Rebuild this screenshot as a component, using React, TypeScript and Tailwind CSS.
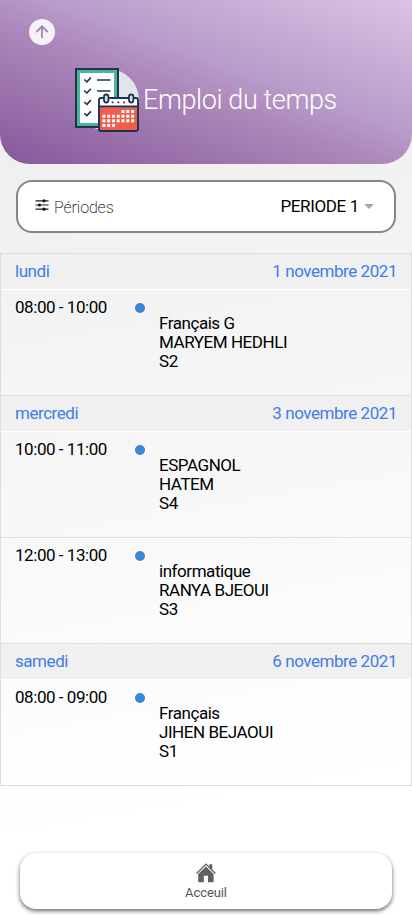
import React from 'react';

type Lesson = {
  time: string;
  subject: string;
  teacher: string;
  room: string;
};

type Day = {
  name: string;
  date: string;
  lessons: Lesson[];
};

const days: Day[] = [
  {
    name: 'lundi',
    date: '1 novembre 2021',
    lessons: [{ time: '08:00 - 10:00', subject: 'Français G', teacher: 'MARYEM HEDHLI', room: 'S2' }],
  },
  {
    name: 'mercredi',
    date: '3 novembre 2021',
    lessons: [
      { time: '10:00 - 11:00', subject: 'ESPAGNOL', teacher: 'HATEM', room: 'S4' },
      { time: '12:00 - 13:00', subject: 'informatique', teacher: 'RANYA BJEOUI', room: 'S3' },
    ],
  },
  {
    name: 'samedi',
    date: '6 novembre 2021',
    lessons: [{ time: '08:00 - 09:00', subject: 'Français', teacher: 'JIHEN BEJAOUI', room: 'S1' }],
  },
];

function BackIcon() {
  return (
    <svg viewBox="0 0 26 26" className="w-[26px] h-[26px]">
      <circle cx="13" cy="13" r="13" fill="#f5f1f8" />
      <path d="M13 19V7.5M7.3 13 13 7.3l5.7 5.7" fill="none" stroke="#a184b4" strokeWidth="1.8" />
    </svg>
  );
}

function ScheduleIcon() {
  const dots = [
    [47.4, 42.9], [52.2, 42.9], [57, 42.9],
    [28.3, 47.6], [33, 47.6], [37.8, 47.6], [42.6, 47.6], [47.4, 47.6], [52.2, 47.6], [57, 47.6],
    [28.3, 52.2], [33, 52.2], [37.8, 52.2], [42.6, 52.2], [47.4, 52.2], [52.2, 52.2], [57, 52.2],
    [28.3, 56.8], [33, 56.8], [37.8, 56.8],
  ];

  return (
    <svg viewBox="0 0 64 64" className="w-16 h-16 shrink-0">
      <circle cx="33" cy="32" r="31" fill="#e1e5ea" />
      <path d="M1 1h42v58H1z" fill="#4db39b" stroke="#1d3450" strokeWidth="2" />
      <path d="M5 5h34v50H5z" fill="#fff" />
      {/* Checklist */}
      <g fill="none" stroke="#1d3450" strokeWidth="1.6">
        <path d="m9.3 11.5 2.6 2.3 4-4.2M9.3 22.7l2.6 2.3 4-4.2M9.3 34l2.6 2.3 4-4.2M9.3 45.3l2.6 2.3 4-4.2" />
        <path d="M22 12h13.5M22 23h13.5" />
      </g>
      {/* Calendar */}
      <rect x="24" y="30" width="39" height="33" rx="2" fill="#f05d4d" />
      <path d="M24 38.5V32a2 2 0 0 1 2-2h35a2 2 0 0 1 2 2v6.5z" fill="#fff" />
      <path d="M24 38.3h39" stroke="#1d3450" strokeWidth="1.7" />
      <rect x="24" y="30" width="39" height="33" rx="2" fill="none" stroke="#1d3450" strokeWidth="1.9" />
      <rect x="29" y="26.5" width="4.4" height="8" rx="2.2" fill="#e1e5ea" stroke="#1d3450" strokeWidth="1.8" />
      <rect x="54" y="26.5" width="4.4" height="8" rx="2.2" fill="#e1e5ea" stroke="#1d3450" strokeWidth="1.8" />
      <path d="M36.7 34.4h1.8M42.5 34.4h1.8M48.3 34.4h1.8" stroke="#1d3450" strokeWidth="1.8" />
      {dots.map(([x, y]) => (
        <rect key={`${x}-${y}`} x={x - 0.9} y={y - 0.9} width="3" height="3" fill="#fff" />
      ))}
    </svg>
  );
}

function FilterIcon() {
  return (
    <svg viewBox="0 0 14 12" className="w-3.5 h-3 shrink-0 -translate-y-[3px]">
      <path d="M.5 1.8h13M.5 6h13M.5 10.2h13" stroke="#222" strokeWidth="1.2" />
      <g fill="#111">
        <circle cx="9" cy="1.8" r="1.6" />
        <circle cx="4.5" cy="6" r="1.6" />
        <circle cx="9" cy="10.2" r="1.6" />
      </g>
    </svg>
  );
}

function HomeIcon() {
  return (
    <svg viewBox="0 0 20 20" className="w-5 h-5" fill="#616161">
      <path d="M10 3.4 2.2 11v7.3c0 .6.4 1 1 1h4.6v-6.6h4.2v6.6h4.6c.6 0 1-.4 1-1V11z" />
      <path d="M10 .2 13.3 3.4V1.2h3v5.2l3.6 3.7-.9.9L10 2.1 1 11l-.9-.9z" />
    </svg>
  );
}

function LessonRow({ lesson }: { lesson: Lesson; key?: string }) {
  return (
    <div className="h-[106px] flex border-t border-[#dddddd] first:border-white pt-[7px] pl-3.5">
      <span className="w-30 leading-5">{lesson.time}</span>
      <span className="w-2.5 h-2.5 mt-1.5 rounded-full bg-[#3788d8] shrink-0" />
      <div className="ml-3.5 mt-[17px] leading-[19px]">
        <p>{lesson.subject}</p>
        <p>{lesson.teacher}</p>
        <p>{lesson.room}</p>
      </div>
    </div>
  );
}

export default function App() {
  return (
    <div className="h-[915px] flex flex-col overflow-hidden bg-[linear-gradient(170deg,#efefef_15%,#ffffff_85%)] text-black font-['Roboto',sans-serif] text-[17px] tracking-[-0.45px]">
      {/* Header */}
      <header className="h-[164px] shrink-0 rounded-b-[30px] bg-[linear-gradient(200deg,#dac3e5_0%,#b79bc9_43%,#ac87ba_56%,#85589b_100%)] pt-[19px]">
        <div className="ml-[29px] w-[26px] h-[26px]">
          <BackIcon />
        </div>
        <div className="mt-[23px] ml-[75px] flex items-center">
          <ScheduleIcon />
          <h1 className="ml-1 text-[27px] font-light text-white tracking-[-0.4px] whitespace-nowrap">Emploi du temps</h1>
        </div>
      </header>

      {/* Period selector */}
      <div className="h-[53px] shrink-0 mt-4 mx-4 pl-[17px] pr-5 flex items-center justify-between bg-white border-2 border-[#868686] rounded-2xl">
        <div className="flex items-center gap-[5px] font-extralight text-base tracking-[-0.1px] pt-0.5">
          <FilterIcon />
          <span>Périodes</span>
        </div>
        <div className="flex items-center gap-[5px]">
          <span className="tracking-[-0.35px]">PERIODE 1</span>
          <span className="border-x-[5px] border-x-transparent border-t-[5px] border-t-[#a6a6a6]" />
        </div>
      </div>

      {/* Agenda */}
      <main className="mt-5 border-x border-b border-[#dddddd]">
        {days.map((day) => (
          <section key={day.name}>
            <div className="h-9 flex items-center justify-between border-t border-[#dddddd] bg-[#f0f0f0] px-3.5 text-[#3f7de8]">
              <span>{day.name}</span>
              <span>{day.date}</span>
            </div>
            <div>
              {day.lessons.map((lesson) => (
                <LessonRow key={lesson.time} lesson={lesson} />
              ))}
            </div>
          </section>
        ))}
      </main>

      {/* Bottom navigation */}
      <nav className="mt-auto mb-1.5 mx-5 h-14 shrink-0 flex flex-col items-center bg-white rounded-2xl shadow-[0_2px_4px_rgba(0,0,0,0.6)] pt-2.5">
        <HomeIcon />
        <span className="mt-0.5 text-[13px] leading-4 tracking-[-0.1px] text-[#555555]">Acceuil</span>
      </nav>
    </div>
  );
}
